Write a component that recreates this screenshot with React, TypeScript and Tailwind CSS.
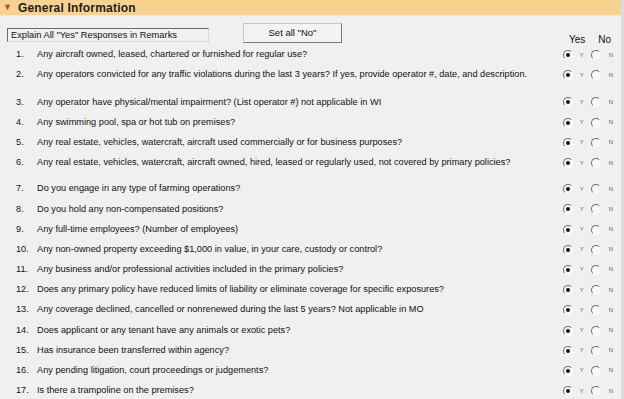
const questions: { n: number; text: string; gap?: string }[] = [
  { n: 1, text: 'Any aircraft owned, leased, chartered or furnished for regular use?' },
  { n: 2, text: 'Any operators convicted for any traffic violations during the last 3 years? If yes, provide operator #, date, and description.' },
  { n: 3, text: 'Any operator have physical/mental impairment? (List operator #) not applicable in WI', gap: 'mt-[7px]' },
  { n: 4, text: 'Any swimming pool, spa or hot tub on premises?' },
  { n: 5, text: 'Any real estate, vehicles, watercraft, aircraft used commercially or for business purposes?' },
  { n: 6, text: 'Any real estate, vehicles, watercraft, aircraft owned, hired, leased or regularly used, not covered by primary policies?' },
  { n: 7, text: 'Do you engage in any type of farming operations?', gap: 'mt-[6px]' },
  { n: 8, text: 'Do you hold any non-compensated positions?' },
  { n: 9, text: 'Any full-time employees? (Number of employees)' },
  { n: 10, text: 'Any non-owned property exceeding $1,000 in value, in your care, custody or control?' },
  { n: 11, text: 'Any business and/or professional activities included in the primary policies?' },
  { n: 12, text: 'Does any primary policy have reduced limits of liability or eliminate coverage for specific exposures?' },
  { n: 13, text: 'Any coverage declined, cancelled or nonrenewed during the last 5 years?  Not applicable in MO' },
  { n: 14, text: 'Does applicant or any tenant have any animals or exotic pets?' },
  { n: 15, text: 'Has insurance been transferred within agency?' },
  { n: 16, text: 'Any pending litigation, court proceedings or judgements?' },
  { n: 17, text: 'Is there a trampoline on the premises?' },
];

function Radio({ checked }: { checked?: boolean }) {
  return (
    <span className="w-[10px] h-[10px] rounded-full border border-t-[#6e6e6e] border-l-[#6e6e6e] border-b-[#fafafa] border-r-[#fafafa] bg-[#f7f7f7] flex items-center justify-center">
      {checked && <span className="w-[4px] h-[4px] rounded-full bg-[#141414]" />}
    </span>
  );
}

function YesNo() {
  return (
    <div className="flex items-center">
      <Radio checked />
      <span className="ml-[7px] text-[6px] text-[#606060] w-[8px]">Y</span>
      <span className="ml-[3px]"><Radio /></span>
      <span className="ml-[8px] text-[6px] text-[#606060]">N</span>
    </div>
  );
}

export default function App() {
  return (
    <div
      className="w-[624px] h-[399px] bg-[#f0f0f0] overflow-hidden border-r-[3px] border-[#dcdcdc]"
      style={{ fontFamily: '"Liberation Sans", Arial, sans-serif' }}
    >
      <div className="h-[15px] bg-[#f8d28e] flex items-center pl-[3px]">
        <span className="text-[#b0464f] text-[9px] leading-none mr-[6px]">▼</span>
        <span className="font-bold text-[12px] text-[#1c1c1c] tracking-[0.2px]">General Information</span>
      </div>
      <div className="h-[1px] bg-[#fbe6bd]" />

      <div className="h-[21px] mt-[6px] flex items-end">
        <div className="ml-[7px] mb-[1px] w-[202px] h-[14px] border border-t-[#6b6b6b] border-l-[#6b6b6b] border-b-[#d8d8d8] border-r-[#d8d8d8] bg-[#f0f0f0] text-[9.3px] leading-[12px] pl-[3px] text-[#111]">
          Explain All "Yes" Responses in Remarks
        </div>
        <button className="ml-[34px] w-[99px] h-[20px] bg-[#f3f3f3] border border-[#c8c8c8] border-b-[#7a7a7a] border-r-[#7a7a7a] text-[9.5px] text-[#111]">
          Set all "No"
        </button>
        <div className="ml-auto mr-[10px] mb-[-4px] flex gap-[13px] text-[10px] text-[#111]">
          <span>Yes</span>
          <span>No</span>
        </div>
      </div>

      <div className="mt-[2px]">
        {questions.map((q) => (
          <div
            key={q.n}
            className={`flex items-center h-[20.2px] text-[9.2px] text-[#111] ${q.gap ?? ''}`}
          >
            <span className="w-[37px] pl-[16px]">{q.n}.</span>
            <span className="flex-1 whitespace-nowrap">{q.text}</span>
            <div className="mr-[8px] flex">
              <YesNo />
            </div>
          </div>
        ))}
      </div>
    </div>
  );
}
